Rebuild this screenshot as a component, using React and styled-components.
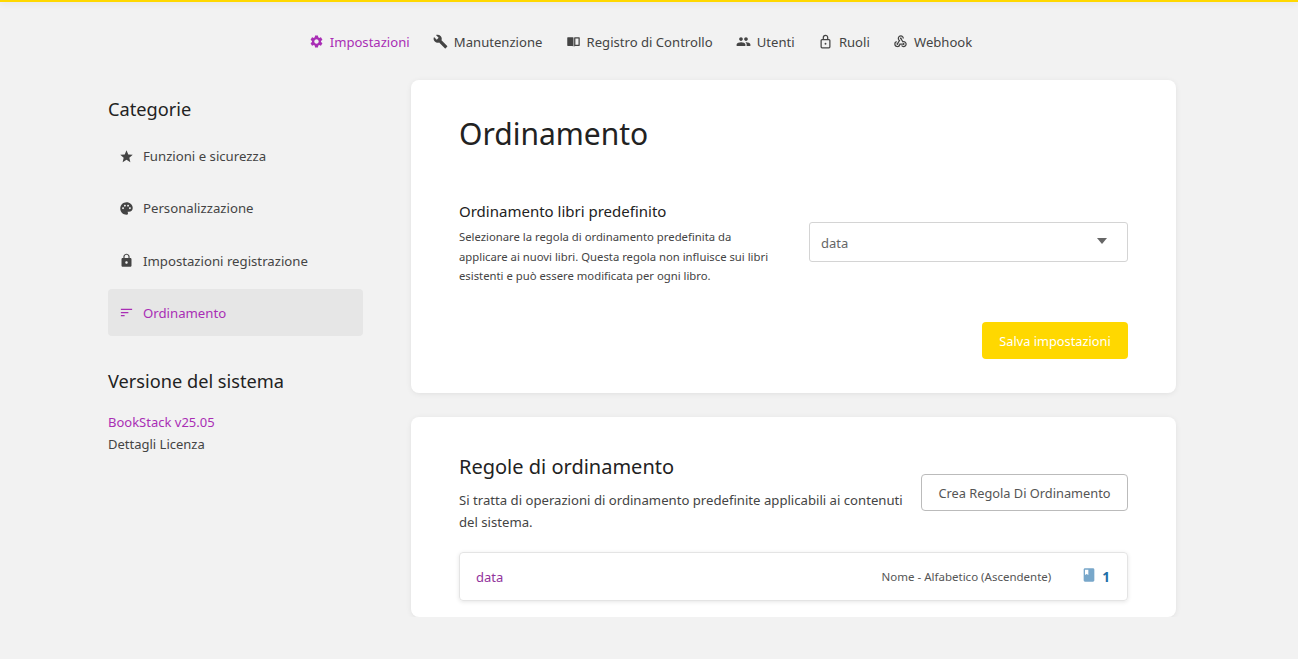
import React from "react";
import styled, { createGlobalStyle } from "styled-components";
import {
  MdSettings,
  MdBuild,
  MdPeople,
  MdWebhook,
  MdStar,
  MdPalette,
  MdLock,
  MdSort,
  MdBook,
} from "react-icons/md";

const GlobalStyle = createGlobalStyle`
  html, body {
    margin: 0;
    padding: 0;
    background: #f2f2f2;
    font-family: "Noto Sans", "Open Sans", sans-serif;
    color: #444;
  }
  * { box-sizing: border-box; }
`;

const TopBar = styled.div`
  height: 2px;
  background: #ffd800;
  box-shadow: 0 1px 6px rgba(0, 0, 0, 0.12);
`;

const Nav = styled.nav`
  display: flex;
  justify-content: center;
  gap: 23.200px;
  padding: 30px 17px 0 0;
  height: 78px;
`;

const NavItem = styled.a`
  display: flex;
  align-items: center;
  gap: 6px;
  height: 20px;
  font-size: 13.100px;
  color: ${(p) => (p.$active ? "#a92eb5" : "#444")};
  svg { width: 15px; height: 15px; margin-top: -2px; }
`;

const AuditIcon = () => (
  <svg viewBox="0 0 24 24" fill="currentColor">
    <path d="M3 5h8c.8 0 1 .4 1 1v14c-.5-.6-1-1-2-1H3a1 1 0 0 1-1-1V6a1 1 0 0 1 1-1z" />
    <path d="M13 6c0-.6.2-1 1-1h7a1 1 0 0 1 1 1v12a1 1 0 0 1-1 1h-6c-1 0-1.500.4-2 1zm2 1v10h5V7z" />
  </svg>
);

const RoleIcon = () => (
  <svg viewBox="0 0 24 24" fill="none" stroke="currentColor" strokeWidth="2">
    <rect x="5" y="9" width="14" height="13" rx="1.5" />
    <path d="M8.500 9V5.500a3.500 3.500 0 0 1 7 0V9" />
    <circle cx="12" cy="15.500" r="1.500" fill="currentColor" stroke="none" />
  </svg>
);

const Layout = styled.div`
  display: grid;
  grid-template-columns: 255px 765px;
  column-gap: 48px;
  width: 1068px;
  margin-left: 108px;
`;

const Sidebar = styled.aside`
  padding-top: 17px;
`;

const SideTitle = styled.h5`
  margin: 0;
  font-size: 18.200px;
  font-weight: 400;
  line-height: 24px;
  color: #222;
`;

const SideList = styled.div`
  display: flex;
  flex-direction: column;
  gap: 5.300px;
  margin-top: 11.500px;
  margin-bottom: 32.800px;
`;

const SideItem = styled.a`
  display: flex;
  align-items: center;
  gap: 9px;
  height: 47px;
  padding-left: 11px;
  border-radius: 4px;
  font-size: 13.200px;
  color: ${(p) => (p.$active ? "#a92eb5" : "#444")};
  background: ${(p) => (p.$active ? "#e6e6e6" : "transparent")};
  svg { width: 15px; height: 15px; }
`;

const VersionList = styled.div`
  margin-top: 18px;
  font-size: 13px;
  line-height: 22px;
`;

const VersionLink = styled.div`
  color: ${(p) => (p.$accent ? "#a92eb5" : "#444")};
`;

const Main = styled.main`
  display: flex;
  flex-direction: column;
  gap: 24px;
`;

const Card = styled.section`
  background: #fff;
  border-radius: 8px;
  box-shadow: 0 1px 6px -1px rgba(0, 0, 0, 0.1);
  padding: ${(p) => p.$pad};
  height: ${(p) => p.$height};
`;

const PageTitle = styled.h1`
  margin: 0;
  font-size: 30px;
  font-weight: 400;
  line-height: 44px;
  color: #222;
`;

const SettingRow = styled.div`
  display: grid;
  grid-template-columns: 1fr 319px;
  column-gap: 30px;
  align-items: start;
  margin-top: 44px;
`;

const SettingLabel = styled.label`
  display: block;
  font-size: 15px;
  line-height: 22px;
  color: #222;
`;

const SettingHelp = styled.p`
  margin: 5px 0 0;
  font-size: 11.300px;
  line-height: 19.500px;
  color: #444;
`;

const Select = styled.div`
  position: relative;
  height: 40px;
  margin-top: 22px;
  display: flex;
  align-items: center;
  padding: 1px 0 0 11px;
  border: 1px solid #d4d4d4;
  border-radius: 3px;
  font-size: 13px;
  color: #666;
  &::after {
    content: "";
    position: absolute;
    right: 20px;
    top: 15px;
    border-left: 5.500px solid transparent;
    border-right: 5.500px solid transparent;
    border-top: 6.500px solid #666;
  }
`;

const Actions = styled.div`
  display: flex;
  justify-content: flex-end;
  margin-top: 36.500px;
`;

const SaveButton = styled.button`
  width: 146px;
  height: 37px;
  border: 0;
  border-radius: 4px;
  background: #ffd800;
  color: #fff;
  font: inherit;
  font-size: 12.800px;
`;

const RulesHeader = styled.div`
  display: flex;
  justify-content: space-between;
  align-items: center;
  gap: 16px;
`;

const RulesIntro = styled.div`
  flex: 1;
`;

const SectionTitle = styled.h2`
  margin: 0;
  font-size: 20px;
  font-weight: 400;
  line-height: 28px;
  color: #222;
`;

const SectionText = styled.p`
  margin: 8px 0 0;
  font-size: 13.150px;
  line-height: 22px;
  color: #444;
`;

const OutlineButton = styled.button`
  flex: none;
  width: 207px;
  height: 37px;
  margin-bottom: 2px;
  padding-top: 3px;
  background: #fff;
  border: 1px solid #bbb;
  border-radius: 4px;
  color: #555;
  font: inherit;
  font-size: 12.800px;
`;

const RuleRow = styled.div`
  display: flex;
  align-items: center;
  height: 49px;
  margin-top: 19px;
  padding: 0 17px 0 16px;
  border: 1px solid #e4e4e4;
  border-radius: 4px;
  box-shadow: 0 1px 4px rgba(0, 0, 0, 0.1);
`;

const RuleName = styled.a`
  flex: 1;
  font-size: 13px;
  color: #92339c;
`;

const RuleSort = styled.span`
  font-size: 11.500px;
  color: #555;
`;

const RuleCount = styled.span`
  display: flex;
  align-items: center;
  gap: 5px;
  margin-left: 30px;
  font-size: 13.500px;
  font-weight: 700;
  color: #206ea7;
  svg { width: 16px; height: 16px; opacity: 0.6; margin-top: -3px; }
`;

const navItems = [
  { label: "Impostazioni", icon: <MdSettings />, active: true },
  { label: "Manutenzione", icon: <MdBuild /> },
  { label: "Registro di Controllo", icon: <AuditIcon /> },
  { label: "Utenti", icon: <MdPeople /> },
  { label: "Ruoli", icon: <RoleIcon /> },
  { label: "Webhook", icon: <MdWebhook /> },
];

const sideItems = [
  { label: "Funzioni e sicurezza", icon: <MdStar /> },
  { label: "Personalizzazione", icon: <MdPalette /> },
  { label: "Impostazioni registrazione", icon: <MdLock /> },
  { label: "Ordinamento", icon: <MdSort />, active: true },
];

const App = () => {
  return (
    <>
      <GlobalStyle />
      <TopBar />
      <Nav>
        {navItems.map((item) => (
          <NavItem key={item.label} $active={item.active}>
            {item.icon}
            {item.label}
          </NavItem>
        ))}
      </Nav>
      <Layout>
        <Sidebar>
          <SideTitle>Categorie</SideTitle>
          <SideList>
            {sideItems.map((item) => (
              <SideItem key={item.label} $active={item.active}>
                {item.icon}
                {item.label}
              </SideItem>
            ))}
          </SideList>
          <SideTitle>Versione del sistema</SideTitle>
          <VersionList>
            <VersionLink $accent>BookStack v25.05</VersionLink>
            <VersionLink>Dettagli Licenza</VersionLink>
          </VersionList>
        </Sidebar>
        <Main>
          <Card $pad="32px 48px 0" $height="313px">
            <PageTitle>Ordinamento</PageTitle>
            <SettingRow>
              <div>
                <SettingLabel>Ordinamento libri predefinito</SettingLabel>
                <SettingHelp>
                  Selezionare la regola di ordinamento predefinita da applicare ai nuovi libri.
                  Questa regola non influisce sui libri esistenti e può essere modificata per ogni
                  libro.
                </SettingHelp>
              </div>
              <Select>data</Select>
            </SettingRow>
            <Actions>
              <SaveButton>Salva impostazioni</SaveButton>
            </Actions>
          </Card>
          <Card $pad="36px 48px 0" $height="200px">
            <RulesHeader>
              <RulesIntro>
                <SectionTitle>Regole di ordinamento</SectionTitle>
                <SectionText>
                  Si tratta di operazioni di ordinamento predefinite applicabili ai contenuti del
                  sistema.
                </SectionText>
              </RulesIntro>
              <OutlineButton>Crea Regola Di Ordinamento</OutlineButton>
            </RulesHeader>
            <RuleRow>
              <RuleName>data</RuleName>
              <RuleSort>Nome - Alfabetico (Ascendente)</RuleSort>
              <RuleCount>
                <MdBook />1
              </RuleCount>
            </RuleRow>
          </Card>
        </Main>
      </Layout>
    </>
  );
};

export default App;
